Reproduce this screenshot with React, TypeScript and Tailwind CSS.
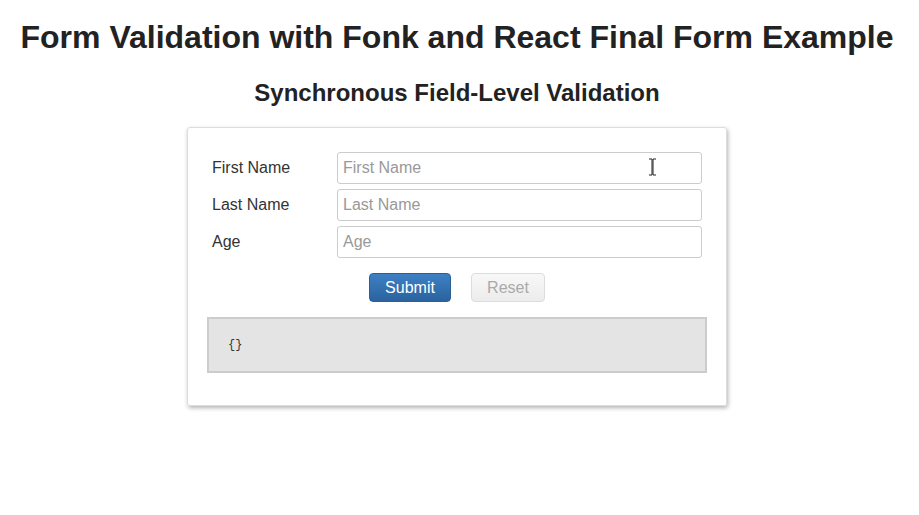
import React from "react";

function Row({ label, placeholder }: { label: string; placeholder: string }) {
  return (
    <div className="flex items-center mb-[5px]">
      <label className="w-[125px] text-[16px] text-[#333]">{label}</label>
      <input
        className="w-[365px] h-[32px] px-[5px] text-[16px] border border-[#ccc] rounded-[3px] placeholder:text-[#999] outline-none"
        placeholder={placeholder}
      />
    </div>
  );
}

function App() {
  return (
    <div className="w-[914px] h-[515px] bg-white flex flex-col items-center font-['Liberation_Sans',Arial,sans-serif] text-[#222] relative">
      <h1 className="mt-[17px] text-[32px] font-bold leading-[40px]">
        Form Validation with Fonk and React Final Form Example
      </h1>
      <h2 className="mt-[22px] text-[24px] font-bold leading-[28px]">
        Synchronous Field-Level Validation
      </h2>
      <div className="mt-[20px] w-[540px] border border-[#ddd] rounded-[3px] shadow-[1px_2px_4px_rgba(0,0,0,0.3)] pl-[24px] pr-[24px] pt-[24px] pb-[32px]">
        <Row label="First Name" placeholder="First Name" />
        <Row label="Last Name" placeholder="Last Name" />
        <Row label="Age" placeholder="Age" />
        <div className="flex justify-center gap-[20px] mt-[15px]">
          <button className="w-[82px] h-[29px] rounded-[4px] border border-[#2b5f96] bg-gradient-to-b from-[#3e80c4] to-[#2a639f] text-white text-[16px]">
            Submit
          </button>
          <button
            disabled
            className="w-[74px] h-[29px] rounded-[4px] border border-[#ddd] bg-gradient-to-b from-[#f8f8f8] to-[#ececec] text-[#aaa] text-[16px]"
          >
            Reset
          </button>
        </div>
        <pre className="mt-[15px] mx-[-5px] h-[56px] bg-[#e4e4e4] border-2 border-[#ccc] px-[19px] flex items-center text-[12px] font-['Liberation_Mono',monospace] text-[#333]">
          {"{}"}
        </pre>
      </div>
      <svg className="absolute left-[648px] top-[158px]" width="9" height="18" viewBox="0 0 9 18">
        <path d="M1 1h3v16H1M8 1H5v16h3" fill="none" stroke="#222" strokeWidth="1" />
      </svg>
    </div>
  );
}

export default App;
